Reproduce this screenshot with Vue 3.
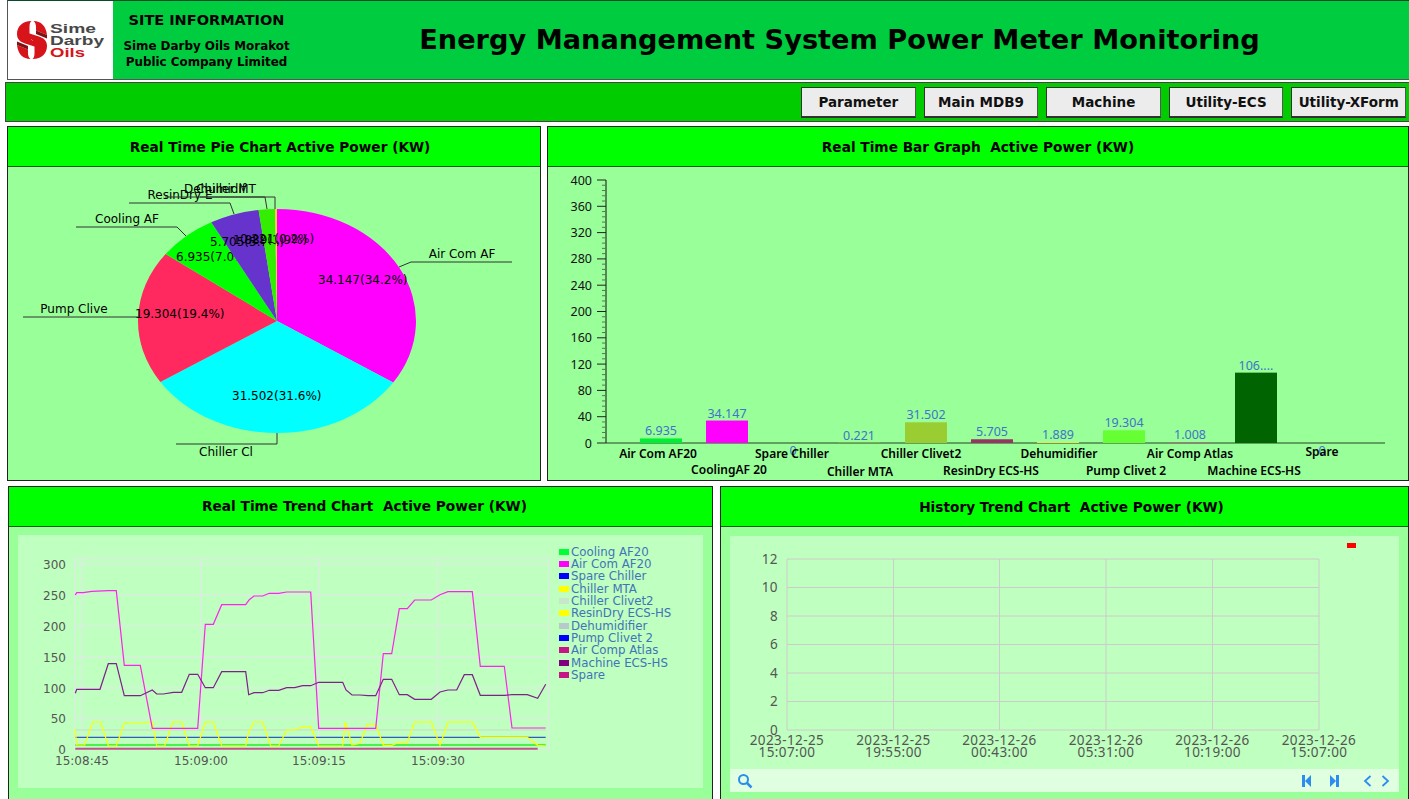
<script setup>
const buttons = ['Parameter', 'Main MDB9', 'Machine', 'Utility-ECS', 'Utility-XForm']

// pie slices clockwise from 12 o'clock, each label is painted right after its slice
const pieCenter = { x: 277, y: 321, rx: 139, ry: 112 }
const pieData = [
  { value: 34.147, color: '#ff00ff', label: '34.147(34.2%)', x: 318, y: 284 },
  { value: 31.502, color: '#00ffff', label: '31.502(31.6%)', x: 232, y: 400 },
  { value: 19.304, color: '#ff285f', label: '19.304(19.4%)', x: 135, y: 318 },
  { value: 6.935, color: '#00ff00', label: '6.935(7.0%)', x: 176, y: 261 },
  { value: 5.705, color: '#6633cc', label: '5.705(5.7%)', x: 210, y: 246 },
  { value: 1.889, color: '#33ee00', label: '1.889(1.9%)', x: 233, y: 244 },
  { value: 0.221, color: '#ffcc33', label: '0.221(0.2%)', x: 240, y: 243 },
]
const pieTotal = pieData.reduce((sum, d) => sum + d.value, 0)
let pieAngle = 0
const slices = pieData.map((d) => {
  const start = pieAngle
  pieAngle += (d.value / pieTotal) * Math.PI * 2
  const { x, y, rx, ry } = pieCenter
  const x1 = x + rx * Math.sin(start)
  const y1 = y - ry * Math.cos(start)
  const x2 = x + rx * Math.sin(pieAngle)
  const y2 = y - ry * Math.cos(pieAngle)
  const large = pieAngle - start > Math.PI ? 1 : 0
  return { ...d, path: `M${x} ${y}L${x1} ${y1}A${rx} ${ry} 0 ${large} 1 ${x2} ${y2}Z` }
})
const pieLeaders = [
  { points: '399,267 411,262 512,262', text: 'Air Com AF', x: 462, y: 258 },
  { points: '277,433 277,444 176,444', text: 'Chiller Cl', x: 226, y: 456 },
  { points: '138,317 23,317', text: 'Pump Clive', x: 74, y: 313 },
  { points: '186,236 177,227 76,227', text: 'Cooling AF', x: 127, y: 223 },
  { points: '234,214 230,203 129,203', text: 'ResinDry E', x: 180, y: 199 },
  { points: '267,209 265,197 165,197', text: 'Dehumidif', x: 215, y: 193 },
  { points: '275,209 275,197 200,197', text: 'Chiller MT', x: 226, y: 193 },
]

// bar chart
const barBase = 443
const barScale = 263 / 400
const yTicks = []
for (let v = 0; v <= 400; v += 8) {
  yTicks.push({ v, y: barBase - v * barScale, major: v % 40 === 0 })
}
const barData = [
  { text: '6.935', value: 6.935, x: 640, color: '#00ee33' },
  { text: '34.147', value: 34.147, x: 706, color: '#ff00ff' },
  { text: '0', value: 0, x: 772, color: '#0000ff', below: true },
  { text: '0.221', value: 0.221, x: 838, color: '#ffff00' },
  { text: '31.502', value: 31.502, x: 905, color: '#9acd32' },
  { text: '5.705', value: 5.705, x: 971, color: '#993366' },
  { text: '1.889', value: 1.889, x: 1037, color: '#e6e65c' },
  { text: '19.304', value: 19.304, x: 1103, color: '#66ff33' },
  { text: '1.008', value: 1.008, x: 1169, color: '#cc6699' },
  { text: '106....', value: 107, x: 1235, color: '#006400' },
  { text: '0', value: 0, x: 1301, color: '#c71585', below: true },
]
const barLabels = [
  { text: 'Air Com AF20', x: 658, y: 458 },
  { text: 'CoolingAF 20', x: 729, y: 474 },
  { text: 'Spare Chiller', x: 792, y: 458 },
  { text: 'Chiller MTA', x: 860, y: 476 },
  { text: 'Chiller Clivet2', x: 921, y: 458 },
  { text: 'ResinDry ECS-HS', x: 991, y: 475 },
  { text: 'Dehumidifier', x: 1059, y: 458 },
  { text: 'Pump Clivet 2', x: 1126, y: 475 },
  { text: 'Air Comp Atlas', x: 1190, y: 458 },
  { text: 'Machine ECS-HS', x: 1254, y: 475 },
  { text: 'Spare', x: 1322, y: 456 },
]

// trend chart, samples read off the reference at 3x
const line = (arr) => {
  let out = ''
  for (let i = 0; i < arr.length; i += 2) {
    out += `${(arr[i] / 3).toFixed(1)},${(530 + arr[i + 1] / 3).toFixed(1)} `
  }
  return out
}
const shift = (arr) => arr.map((n, i) => (i % 2 === 0 ? n + 1080 : n))
const magenta = [226, 195, 230, 188, 250, 188, 275, 184, 325, 182, 349, 182, 373, 406, 421, 406, 457, 595, 593, 595, 616, 283, 640, 283, 665, 224, 737, 224, 748, 209, 762, 198, 788, 198, 808, 190, 836, 190, 860, 186, 932, 186, 956, 595,
  ...shift([47, 595, 70, 371, 95, 371, 118, 236, 142, 236, 164, 210, 214, 210, 240, 194, 264, 185, 337, 185, 361, 409, 433, 409, 456, 594, 557, 594])]
const purple = [226, 490, 230, 478, 300, 478, 325, 401, 349, 401, 373, 497, 421, 497, 457, 480, 470, 492, 490, 492, 520, 487, 545, 487, 568, 433, 593, 433, 616, 473, 640, 473, 665, 425, 737, 425, 746, 494, 762, 488, 788, 488, 808, 481, 836, 481, 860, 473, 884, 473, 908, 467, 932, 467, 956, 457, 1028, 457, 1038, 480, 1056, 495,
  ...shift([0, 495, 24, 497, 47, 497, 70, 448, 95, 448, 118, 494, 142, 494, 164, 508, 214, 508, 240, 486, 264, 480, 290, 480, 313, 434, 337, 434, 361, 496, 433, 496, 456, 494, 502, 494, 533, 505, 557, 463])]
const yellow = [226, 598, 230, 645, 254, 645, 278, 576, 302, 576, 325, 648, 349, 648, 373, 579, 421, 579, 457, 576, 470, 648, 494, 648, 518, 576, 545, 576, 568, 648, 593, 648, 616, 576, 640, 576, 665, 648, 737, 648, 746, 605, 762, 576, 788, 576, 812, 648, 836, 648, 860, 600, 884, 600, 908, 590, 932, 590, 956, 648, 1028, 648, 1036, 576, 1056, 645,
  ...shift([0, 640, 22, 583, 47, 583, 70, 646, 95, 646, 118, 637, 142, 637, 164, 576, 214, 576, 240, 646, 264, 576, 337, 576, 361, 622, 502, 622, 533, 646, 557, 648])]
const trendLines = [
  { points: line([226, 600, 1637, 600]), color: '#c8e6c9', width: 1.5 },
  { points: line([226, 622, 1637, 622]), color: '#1030c0', width: 1 },
  { points: line([226, 645, 1637, 645]), color: '#22ee22', width: 1.5 },
  { points: line(yellow), color: '#ffff00', width: 1.2 },
  { points: line(magenta), color: '#ff22ee', width: 1.2 },
  { points: line(purple), color: '#80208a', width: 1.2 },
  { points: line([226, 656, 1613, 656]), color: '#c0508a', width: 2 },
]
const trendY = [
  { v: 300, y: 564 },
  { v: 250, y: 595 },
  { v: 200, y: 626 },
  { v: 150, y: 657 },
  { v: 100, y: 688 },
  { v: 50, y: 718 },
  { v: 0, y: 749 },
]
const trendX = [
  { t: '15:08:45', x: 82 },
  { t: '15:09:00', x: 201 },
  { t: '15:09:15', x: 319 },
  { t: '15:09:30', x: 438 },
]
const legend = [
  { name: 'Cooling AF20', color: '#00ff33', y: 552 },
  { name: 'Air Com AF20', color: '#ff00ff', y: 564 },
  { name: 'Spare Chiller', color: '#0000ff', y: 576 },
  { name: 'Chiller MTA', color: '#ffff00', y: 589 },
  { name: 'Chiller Clivet2', color: '#c8e6c9', y: 601 },
  { name: 'ResinDry ECS-HS', color: '#ffff00', y: 613 },
  { name: 'Dehumidifier', color: '#b8c9cc', y: 626 },
  { name: 'Pump Clivet 2', color: '#0000ff', y: 638 },
  { name: 'Air Comp Atlas', color: '#c71585', y: 650 },
  { name: 'Machine ECS-HS', color: '#800080', y: 663 },
  { name: 'Spare', color: '#c71585', y: 675 },
]

// history chart
const histY = [12, 10, 8, 6, 4, 2, 0].map((v) => ({ v, y: 730 - v * 14.25 }))
const histX = [
  { d: '2023-12-25', t: '15:07:00', x: 787 },
  { d: '2023-12-25', t: '19:55:00', x: 893.5 },
  { d: '2023-12-26', t: '00:43:00', x: 999.5 },
  { d: '2023-12-26', t: '05:31:00', x: 1106 },
  { d: '2023-12-26', t: '10:19:00', x: 1212.5 },
  { d: '2023-12-26', t: '15:07:00', x: 1319 },
]
</script>

<template>
  <div class="page">
    <header class="site-header">
      <div class="logo">
        <svg width="104" height="78" viewBox="8 1 104 78">
          <g id="swirl">
            <path d="M31.5 21C22 21 17 27 17 34C17 39 20 42 25 43.5L36 47L36 42L32.5 40.500C30.500 39.500 29.500 37 29.500 34L29.500 27C29.500 24 30 22 31.500 21Z" fill="#d7141a" />
            <path d="M33.500 21C41 21 46 26 47 35L36 30.500L36 27C36 24 35 22 33.500 21Z" fill="#d7141a" />
            <path d="M36 30.500L47 35L47 38.500L36 34Z" fill="#7c1416" />
            <g transform="rotate(180 32 40)">
              <path d="M31.5 21C22 21 17 27 17 34C17 39 20 42 25 43.5L36 47L36 42L32.5 40.500C30.500 39.500 29.500 37 29.500 34L29.500 27C29.500 24 30 22 31.500 21Z" fill="#d7141a" />
              <path d="M33.500 21C41 21 46 26 47 35L36 30.500L36 27C36 24 35 22 33.500 21Z" fill="#d7141a" />
              <path d="M36 30.500L47 35L47 38.500L36 34Z" fill="#7c1416" />
            </g>
          </g>
          <text x="50" y="33" textLength="46" lengthAdjust="spacingAndGlyphs" class="logo-text">Sime</text>
          <text x="50" y="45" textLength="54" lengthAdjust="spacingAndGlyphs" class="logo-text">Darby</text>
          <text x="50" y="57" textLength="35" lengthAdjust="spacingAndGlyphs" class="logo-text logo-red">Oils</text>
        </svg>
      </div>
      <div class="site-info">
        <div class="site-heading">SITE INFORMATION</div>
        <div class="site-name">Sime Darby Oils Morakot<br />Public Company Limited</div>
      </div>
      <h1 class="main-title">Energy Manangement System Power Meter Monitoring</h1>
    </header>

    <nav class="toolbar">
      <button v-for="b in buttons" :key="b" class="tool-btn">{{ b }}</button>
    </nav>

    <section class="row row-top">
      <div class="panel">
        <div class="panel-title pie-title">Real Time Pie Chart Active Power (KW)</div>
        <div class="panel-body">
          <svg class="chart" width="532" height="313" viewBox="8 167 532 313">
            <template v-for="s in slices" :key="s.label">
              <path :d="s.path" :fill="s.color" />
              <text :x="s.x" :y="s.y" class="pie-text">{{ s.label }}</text>
            </template>
            <template v-for="l in pieLeaders" :key="l.text">
              <polyline :points="l.points" fill="none" stroke="#333" stroke-width="1" />
              <text :x="l.x" :y="l.y" text-anchor="middle" class="pie-text">{{ l.text }}</text>
            </template>
          </svg>
        </div>
      </div>

      <div class="panel">
        <div class="panel-title">Real Time Bar Graph&nbsp; Active Power (KW)</div>
        <div class="panel-body">
          <svg class="chart" width="860" height="313" viewBox="548 167 860 313">
            <line x1="606" y1="180" x2="606" :y2="barBase" stroke="#111" />
            <line x1="606" :y1="barBase" x2="1385" :y2="barBase" stroke="#224422" />
            <template v-for="t in yTicks" :key="t.v">
              <line :x1="t.major ? 597 : 602" x2="606" :y1="t.y" :y2="t.y" :stroke="t.major ? '#222' : '#557755'" />
              <text v-if="t.major" x="592" :y="t.y + 4.5" text-anchor="end" class="axis-dark">{{ t.v }}</text>
            </template>
            <g v-for="b in barData" :key="b.x">
              <rect :x="b.x" :y="barBase - b.value * barScale" width="42" :height="b.value * barScale" :fill="b.color" />
              <text
                :x="b.x + 21"
                :y="b.below ? barBase + 12 : barBase - b.value * barScale - 3"
                text-anchor="middle"
                class="bar-value"
              >{{ b.text }}</text>
            </g>
            <text v-for="l in barLabels" :key="l.text" :x="l.x" :y="l.y" text-anchor="middle" class="bar-label">{{ l.text }}</text>
          </svg>
        </div>
      </div>
    </section>

    <section class="row row-bottom">
      <div class="panel">
        <div class="panel-title trend-title">Real Time Trend Chart&nbsp; Active Power (KW)</div>
        <div class="panel-body trend-body">
          <div class="chart-box trend-box">
            <svg class="chart" width="685" height="253" viewBox="18 535 685 253">
              <line v-for="t in trendY" :key="t.v" x1="75" x2="549" :y1="t.y" :y2="t.y" class="grid" />
              <line x1="75" x2="549" y1="558" y2="558" class="grid" />
              <line v-for="x in [75, 82, 201, 319, 438, 549]" :key="x" :x1="x" :x2="x" y1="558" y2="750" class="grid" />
              <polyline
                v-for="l in trendLines"
                :key="l.points"
                :points="l.points"
                fill="none"
                :stroke="l.color"
                :stroke-width="l.width"
              />
              <text v-for="t in trendY" :key="t.v" x="66" :y="t.y + 4.5" text-anchor="end" class="axis-gray">{{ t.v }}</text>
              <text v-for="t in trendX" :key="t.t" :x="t.x" y="765" text-anchor="middle" class="axis-gray">{{ t.t }}</text>
              <g v-for="l in legend" :key="l.name">
                <rect x="559" :y="l.y - 3" width="10" height="6" :fill="l.color" />
                <text x="571" :y="l.y + 4" class="legend-text">{{ l.name }}</text>
              </g>
            </svg>
          </div>
        </div>
      </div>

      <div class="panel">
        <div class="panel-title history-title">History Trend Chart&nbsp; Active Power (KW)</div>
        <div class="panel-body history-body">
          <div class="chart-box history-box">
            <svg class="chart" width="670" height="233" viewBox="730 536 670 233">
              <rect x="1347" y="543" width="9" height="5" fill="#ff0000" />
              <line v-for="t in histY" :key="t.v" x1="787" x2="1319" :y1="t.y" :y2="t.y" class="hist-grid" />
              <line v-for="t in histX" :key="t.x" :x1="t.x" :x2="t.x" y1="559" y2="730" class="hist-grid" />
              <text v-for="t in histY" :key="t.v" x="778" :y="t.y + 4.5" text-anchor="end" class="hist-text">{{ t.v }}</text>
              <g v-for="t in histX" :key="t.x">
                <text :x="t.x" y="745" text-anchor="middle" class="hist-text">{{ t.d }}</text>
                <text :x="t.x" y="757" text-anchor="middle" class="hist-text">{{ t.t }}</text>
              </g>
            </svg>
          </div>
          <div class="zoom-bar">
            <svg width="16" height="16" viewBox="0 0 16 16" class="search-icon">
              <circle cx="6.5" cy="6.5" r="4.5" fill="none" stroke="#2d8cf0" stroke-width="2" />
              <line x1="10" y1="10" x2="14.5" y2="14.5" stroke="#2d8cf0" stroke-width="2.5" />
            </svg>
            <div class="zoom-controls">
              <svg width="10" height="12" viewBox="0 0 10 12">
                <rect x="0" y="0" width="3" height="12" fill="#2d8cf0" />
                <path d="M9 0V12L3 6Z" fill="#2d8cf0" />
              </svg>
              <svg width="10" height="12" viewBox="0 0 10 12" class="ctl-last">
                <rect x="7" y="0" width="3" height="12" fill="#2d8cf0" />
                <path d="M1 0V12L7 6Z" fill="#2d8cf0" />
              </svg>
              <svg width="9" height="12" viewBox="0 0 9 12" class="ctl-prev">
                <path d="M7.5 1L2 6L7.5 11" fill="none" stroke="#2d8cf0" stroke-width="1.8" />
              </svg>
              <svg width="9" height="12" viewBox="0 0 9 12" class="ctl-next">
                <path d="M1.5 1L7 6L1.5 11" fill="none" stroke="#2d8cf0" stroke-width="1.8" />
              </svg>
            </div>
          </div>
        </div>
      </div>
    </section>
  </div>
</template>

<style>
html,
body {
  margin: 0;
  background: #fff;
}
</style>

<style scoped>
.page {
  width: 1409px;
  height: 799px;
  overflow: hidden;
  background: #fff;
  display: flex;
  flex-direction: column;
  font-family: 'DejaVu Sans', Verdana, sans-serif;
  color: #000;
}

.site-header {
  margin-left: 7px;
  height: 80px;
  box-sizing: border-box;
  flex: none;
  display: flex;
  align-items: stretch;
  background: #00cc3f;
  border: 1px solid #555;
  border-top-color: #0a4a2a;
  border-right: 0;
}

.logo {
  width: 105px;
  flex: none;
  background: #fff;
}

.logo svg {
  display: block;
}

.logo-text {
  font-family: 'Liberation Sans', Arial, sans-serif;
  font-weight: 700;
  font-size: 13.5px;
  fill: #484848;
}

.logo-red {
  fill: #d7141a;
}

.site-info {
  width: 187px;
  flex: none;
  text-align: center;
  font-weight: 700;
}

.site-heading {
  font-size: 14.5px;
  line-height: 17px;
  margin-top: 11px;
}

.site-name {
  font-size: 11.9px;
  line-height: 16px;
  margin-top: 9px;
}

.main-title {
  margin: 0 0 0 9px;
  flex: 1;
  text-align: center;
  font-size: 27.2px;
  font-weight: 700;
  line-height: 78px;
  padding-right: 39px;
  white-space: nowrap;
}

.toolbar {
  flex: none;
  margin: 2px 0 0 5px;
  height: 40px;
  box-sizing: border-box;
  display: flex;
  justify-content: flex-end;
  align-items: center;
  gap: 8px;
  padding-right: 3px;
  background: #00cc00;
  border: 1px solid #444;
  border-right: 0;
}

.tool-btn {
  width: 114.6px;
  height: 31px;
  padding: 0;
  background: #ececec;
  border: 1px solid #333;
  border-right-color: #555;
  border-bottom-width: 2px;
  font-family: inherit;
  font-size: 13.5px;
  font-weight: 700;
  color: #111;
}

.row {
  flex: none;
  display: grid;
}

.row-top {
  margin-top: 4px;
  padding-left: 7px;
  height: 355px;
  grid-template-columns: 534px 862px;
  column-gap: 6px;
}

.row-bottom {
  margin-top: 5px;
  padding-left: 8px;
  height: 330px;
  grid-template-columns: 705px 689px;
  column-gap: 7px;
}

.panel {
  box-sizing: border-box;
  border: 1px solid #222;
  background: #99ff99;
  display: flex;
  flex-direction: column;
  min-height: 0;
}

.panel-title {
  flex: none;
  height: 40px;
  box-sizing: border-box;
  background: #00ff00;
  border-bottom: 1px solid #1c5c1c;
  text-align: center;
  font-size: 13.7px;
  font-weight: 700;
  line-height: 40px;
}

.pie-title {
  padding-left: 12px;
}

.trend-title {
  padding-left: 8px;
  line-height: 38px;
}

.history-title {
  padding-left: 14px;
}

.panel-body {
  flex: 1;
  min-height: 0;
  background: #99ff99;
}

.chart {
  display: block;
}

.chart-box {
  background: #bfffbf;
}

.trend-body {
  padding: 8px 9px 0;
}

.history-body {
  padding: 9px 9px 0;
}

.pie-text {
  font-size: 12px;
  fill: #000;
}

.axis-dark {
  font-family: 'Noto Sans', sans-serif;
  font-size: 12.5px;
  fill: #111;
}

.bar-value {
  font-family: 'Noto Sans', sans-serif;
  font-size: 12.5px;
  fill: #3f74c8;
}

.bar-label {
  font-family: 'Noto Sans', sans-serif;
  font-size: 12px;
  font-weight: 600;
  fill: #000;
}

.grid {
  stroke: #e6e6ec;
  stroke-width: 1;
}

.axis-gray {
  font-size: 12px;
  fill: #555;
}

.legend-text {
  font-size: 11.8px;
  fill: #3f74b8;
}

.hist-grid {
  stroke: #ccc;
  stroke-width: 1;
}

.hist-text {
  font-family: 'Noto Sans', sans-serif;
  font-size: 13.5px;
  letter-spacing: 0.4px;
  fill: #555;
}

.zoom-bar {
  height: 23px;
  box-sizing: border-box;
  display: flex;
  align-items: center;
  justify-content: space-between;
  padding: 0 9px 0 7px;
  background: #e0ffe0;
}

.zoom-controls {
  display: flex;
  align-items: center;
}

.search-icon {
  display: block;
}

.ctl-last {
  margin-left: 17px;
}

.ctl-prev {
  margin-left: 24px;
}

.ctl-next {
  margin-left: 9px;
}
</style>
